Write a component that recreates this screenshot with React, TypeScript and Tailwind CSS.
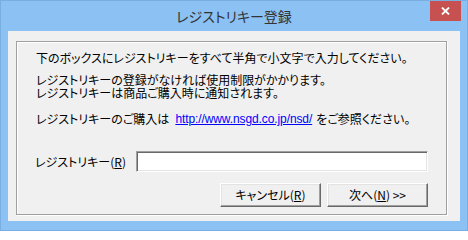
import React from "react";

const jp = "font-['MS_UI_Gothic','Noto_Sans_CJK_JP',sans-serif] [font-feature-settings:'palt']";

const RaisedButton: React.FC<{ children: React.ReactNode }> = ({ children }) => (
  <button
    className={`${jp} w-[101px] h-[24px] bg-[#f0f0f0] text-[12px] leading-[12px] text-black border border-t-white border-l-white border-r-[#696969] border-b-[#696969] shadow-[inset_-1px_-1px_0_#a0a0a0,inset_1px_1px_0_#e3e3e3] flex items-center justify-center`}
  >
    {children}
  </button>
);

export default function App() {
  return (
    <div className="w-[468px] h-[231px] bg-[#8bc1f3] flex flex-col border border-[#79aee3]">
      {/* Title bar */}
      <div className="h-[30px] grid grid-cols-[1fr_auto_1fr] items-start">
        <div />
        <div
          className={`${jp} pt-[7px] text-[14px] leading-[16px] text-[#333] font-['Meiryo_UI','Noto_Sans_CJK_JP',sans-serif]`}
        >
          レジストリキー登録
        </div>
        <div className="flex justify-end pr-[6px]">
          <div className="w-[31px] h-[20px] bg-[#c75050] flex items-center justify-center">
            <svg width="9" height="8" viewBox="0 0 9 8">
              <path d="M1 0.5L8 7.5M8 0.5L1 7.5" stroke="#fff" strokeWidth="1.8" />
            </svg>
          </div>
        </div>
      </div>

      {/* Client area */}
      <div className="flex-1 mx-[7px] mb-[9px] bg-[#f0f0f0] pt-[10px] pl-[8px] pr-[13px] pb-[6px]">
        <div className="h-[174px] border border-[#a0a0a0] shadow-[inset_1px_1px_0_#fff,1px_1px_0_#fff] pt-[10px] pl-[19px] pr-[18px] flex flex-col">
          <div className={`${jp} text-[12px] leading-[12px] text-black whitespace-nowrap`}>
            <p>下のボックスにレジストリキーをすべて半角で小文字で入力してください。</p>
            <p className="mt-[10px]">レジストリキーの登録がなければ使用制限がかかります。</p>
            <p className="mt-[1px]">レジストリキーは商品ご購入時に通知されます。</p>
            <p className="mt-[14px] flex">
              <span>レジストリキーのご購入は</span>
              <span className="ml-[6px] text-[#0000ff] underline underline-offset-[1px] font-['Liberation_Sans',sans-serif] text-[12px] tracking-[-0.1px]">
                http://www.nsgd.co.jp/nsd/
              </span>
              <span className="ml-[4px]">をご参照ください。</span>
            </p>
          </div>

          <div className="mt-[26px] flex items-center -ml-[1px]">
            <span className={`${jp} w-[101px] text-[12px] leading-[12px] text-black whitespace-nowrap`}>
              レジストリキー(<span className="underline">R</span>)
            </span>
            <div className="w-[292px] h-[21px] bg-white border border-t-[#a0a0a0] border-l-[#a0a0a0] border-r-white border-b-white shadow-[inset_1px_1px_0_#696969,inset_-1px_-1px_0_#e3e3e3]" />
          </div>

          <div className="mt-[11px] flex justify-end gap-[6px]">
            <RaisedButton>
              キャンセル(<span className="underline">R</span>)
            </RaisedButton>
            <RaisedButton>
              次へ(<span className="underline">N</span>) &gt;&gt;
            </RaisedButton>
          </div>
        </div>
      </div>
    </div>
  );
}
